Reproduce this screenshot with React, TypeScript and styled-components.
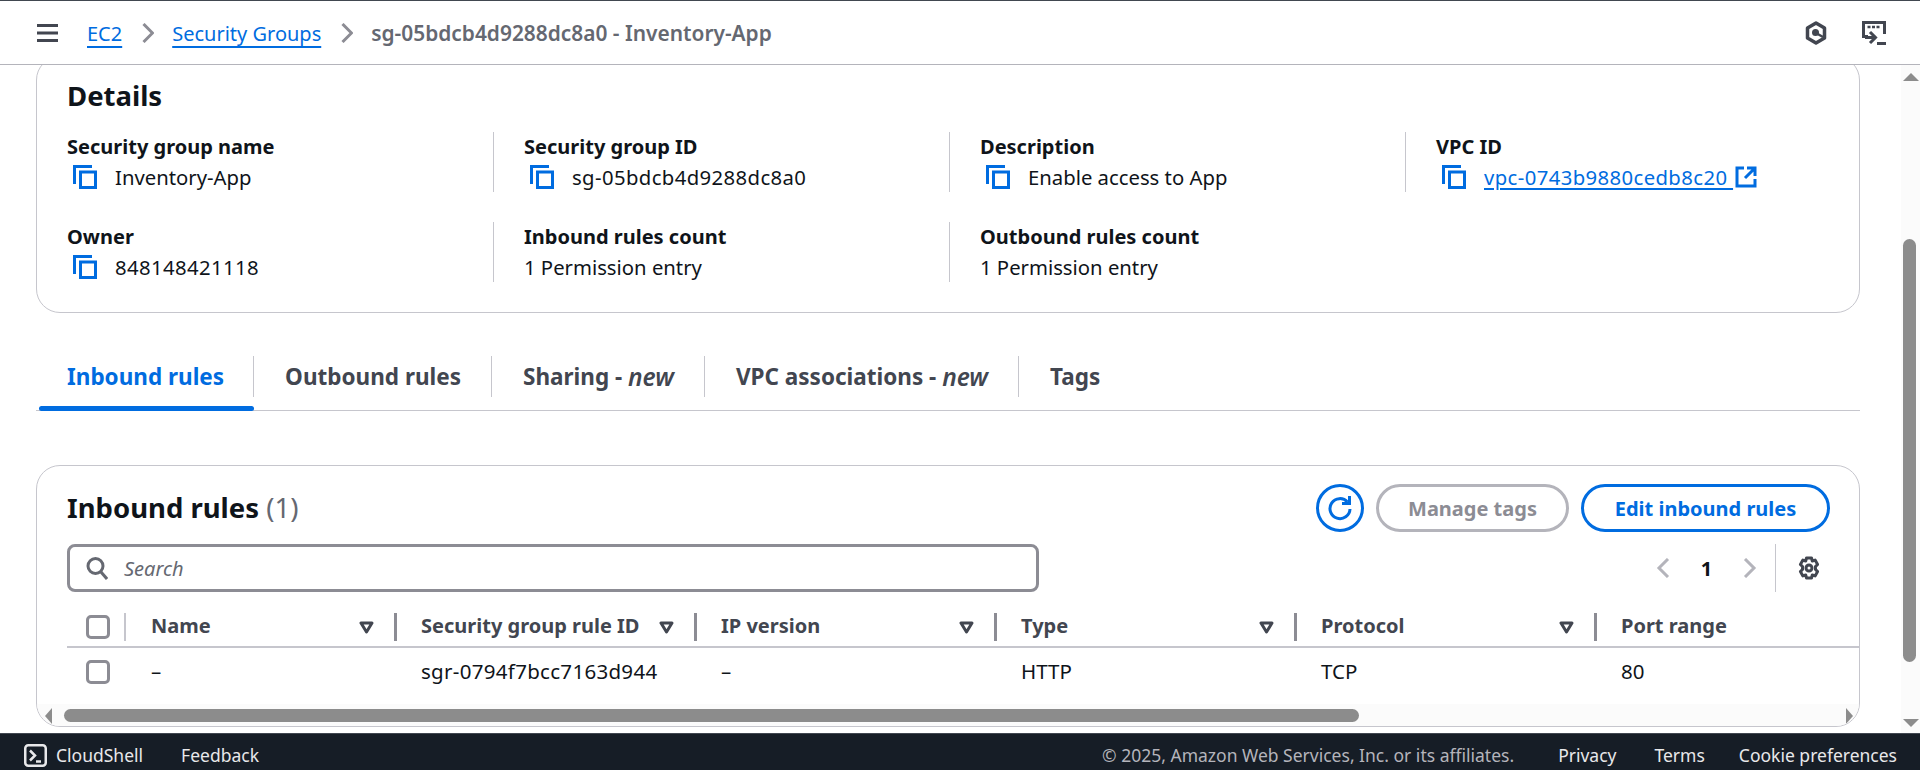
import React from 'react';
import styled, { createGlobalStyle } from 'styled-components';

const GlobalStyle = createGlobalStyle`
  html, body {
    margin: 0;
    padding: 0;
    height: 100%;
    overflow: hidden;
    background: #ffffff;
  }
  * { box-sizing: border-box; }
`;

const FONT = `"Noto Sans", Roboto, sans-serif`;
const BLUE = '#006ce0';

const Page = styled.div`
  width: 1920px;
  height: 770px;
  display: flex;
  flex-direction: column;
  font-family: ${FONT};
  font-size: 20px;
  color: #0f141a;
  overflow: hidden;
`;

/* top bar */
const TopBar = styled.header`
  height: 65px;
  flex: none;
  display: flex;
  align-items: center;
  border-top: 1px solid #414750;
  border-bottom: 1px solid #b4b4bb;
  padding: 0 34px 0 37px;
`;

const Crumbs = styled.nav`
  display: flex;
  align-items: center;
  margin-left: 29px;
  flex: 1;
  font-size: 20px;
  padding-top: 1px;
`;

const CrumbLink = styled.a`
  color: ${BLUE};
  text-decoration: underline;
  text-decoration-thickness: 2px;
  text-underline-offset: 5px;
`;

const CrumbCurrent = styled.span`
  color: #656871;
  font-size: 20.9px;
  font-weight: 600;
`;

const CrumbSep = styled.svg`
  width: 12px;
  height: 20px;
  margin: 0 18px 0 20px;
  fill: none;
  stroke: #8c8c94;
  stroke-width: 3;
`;

const TopIcons = styled.div`
  display: flex;
  gap: 34px;
  align-items: center;
  color: #424650;
`;

/* scroll area */
const Middle = styled.div`
  flex: 1;
  min-height: 0;
  display: flex;
`;

const Content = styled.main`
  flex: 1;
  min-width: 0;
  padding: 0 41px 0 36px;
  overflow: hidden;
`;

const ScrollTrack = styled.div`
  width: 19px;
  flex: none;
  background: #fbfbfb;
  display: flex;
  flex-direction: column;
  align-items: center;
  padding: 8px 0 6px;
`;

const ArrowUp = styled.div`
  width: 0;
  height: 0;
  border-left: 8px solid transparent;
  border-right: 8px solid transparent;
  border-bottom: 8px solid #8c8c8c;
`;

const ArrowDown = styled(ArrowUp)`
  border-bottom: 0;
  border-top: 8px solid #8c8c8c;
`;

const ScrollGap = styled.div`
  flex: 1;
  display: flex;
  flex-direction: column;
  align-self: stretch;
  padding: 158px 4px 57px 2px;
`;

const ScrollThumb = styled.div`
  flex: 1;
  background: #8c8c8c;
  border-radius: 7px;
`;

/* details card */
const Card = styled.section`
  border: 1px solid #c6c6cd;
  border-radius: 24px;
  background: #fff;
`;

const DetailsCard = styled(Card)`
  height: 257px;
  margin-top: -9px;
  padding: 21px 30px 0;
`;

const Heading = styled.h2`
  margin: 0;
  font-size: 27.5px;
  line-height: 36px;
  font-weight: 700;
`;

const DetailsGrid = styled.div`
  display: grid;
  grid-template-columns: repeat(4, 456px);
  grid-auto-rows: 60px;
  row-gap: 30px;
  margin-top: 18px;
`;

const DetailCell = styled.div<{ $first?: boolean }>`
  display: flex;
  flex-direction: column;
  padding-left: ${p => (p.$first ? 0 : 30)}px;
  margin-left: ${p => (p.$first ? 0 : -30)}px;
  border-left: ${p => (p.$first ? 'none' : '1px solid #c6c6cd')};
`;

const DetailLabel = styled.div`
  font-size: 20px;
  font-weight: 700;
  line-height: 30px;
`;

const DetailValue = styled.div<{ $id?: boolean }>`
  display: flex;
  align-items: center;
  height: 30px;
  font-size: 20.3px;
  letter-spacing: ${p => (p.$id ? '0.4px' : '0')};
  white-space: pre;
`;

const CopyWrap = styled.svg`
  width: 24px;
  height: 24px;
  margin: 0 18px 0 6px;
  fill: none;
  stroke: ${BLUE};
  stroke-width: 3;
  flex: none;
`;

const ValueLink = styled.a`
  color: ${BLUE};
  text-decoration: underline;
  text-decoration-thickness: 2px;
  text-underline-offset: 3px;
  margin-right: 2px;
`;

/* tabs */
const Tabs = styled.div`
  display: flex;
  height: 98px;
  align-items: flex-end;
  border-bottom: 1px solid #c6c6cd;
`;

const Tab = styled.div`
  height: 54px;
  position: relative;
  display: flex;
  align-items: flex-start;
`;

const TabLabel = styled.div<{ $active?: boolean; $last?: boolean }>`
  height: 41px;
  display: flex;
  align-items: center;
  padding: 0 30px 0 31px;
  font-size: 22.5px;
  font-weight: 700;
  color: ${p => (p.$active ? BLUE : '#424650')};
  border-right: ${p => (p.$last ? 'none' : '1px solid #c6c6cd')};
  white-space: pre;

  em { font-size: 24.5px; font-weight: 600; font-style: italic; }
`;

const FirstTabLabel = styled(TabLabel)`
  padding-right: 29px;
`;

const TabUnderline = styled.div`
  position: absolute;
  left: 3px;
  right: 0;
  bottom: -1px;
  height: 5px;
  background: ${BLUE};
  border-radius: 3px;
`;

/* inbound rules card */
const RulesCard = styled(Card)`
  margin-top: 54px;
  height: 262px;
  padding-top: 18px;
  overflow: hidden;
  display: flex;
  flex-direction: column;
`;

const RulesHead = styled.div`
  display: flex;
  justify-content: space-between;
  align-items: center;
  padding: 0 29px 0 30px;
  height: 48px;
`;

const Count = styled.span`
  font-weight: 400;
  color: #656871;
`;

const Actions = styled.div`
  display: flex;
  gap: 12px;
  align-items: center;
`;

const Pill = styled.button<{ $disabled?: boolean }>`
  height: 48px;
  padding: 0;
  width: ${p => (p.$disabled ? 193 : 249)}px;
  border-radius: 24px;
  background: #fff;
  border: 3px solid ${p => (p.$disabled ? '#b4b4bb' : BLUE)};
  color: ${p => (p.$disabled ? '#8c8c94' : BLUE)};
  font-family: ${FONT};
  font-size: 20px;
  font-weight: 700;
`;

const RoundButton = styled.button`
  width: 48px;
  height: 48px;
  padding: 0;
  border-radius: 50%;
  background: #fff;
  border: 3px solid ${BLUE};
  display: flex;
  align-items: center;
  justify-content: center;
`;

const ToolRow = styled.div`
  display: flex;
  align-items: center;
  height: 48px;
  margin-top: 12px;
  padding: 0 38px 0 30px;
`;

const SearchBox = styled.div`
  width: 972px;
  height: 48px;
  border: 3px solid #8c8c94;
  border-radius: 8px;
  display: flex;
  align-items: center;
  padding-left: 16px;
  color: #656871;
  font-style: italic;
  font-size: 20px;
  gap: 16px;
`;

const Pager = styled.div`
  margin-left: auto;
  display: flex;
  align-items: center;
  height: 48px;
`;

const PageNumber = styled.span`
  font-weight: 700;
  font-size: 20px;
  width: 73px;
  text-align: center;
`;

const PagerDivider = styled.div`
  width: 1px;
  height: 48px;
  background: #c6c6cd;
  margin: 0 21px 0 18px;
`;

/* table */
const TABLE_COLUMNS = '59px 268px repeat(5, 300px)';

const HeaderRow = styled.div`
  display: grid;
  grid-template-columns: ${TABLE_COLUMNS};
  margin: 13px 0 0 30px;
  height: 43px;
  border-bottom: 2px solid #c6c6cd;
  width: 1827px;
  flex: none;
`;

const HeaderCell = styled.div<{ $plain?: boolean }>`
  height: 28px;
  margin-top: 8px;
  display: flex;
  align-items: center;
  justify-content: space-between;
  padding: 0 20px 0 ${p => (p.$plain ? 25 : 24)}px;
  font-size: 20px;
  font-weight: 700;
  color: #424650;
  border-left: ${p => (p.$plain ? 'none' : '3px solid #8c8c94')};
`;

const HeaderLabel = styled.span`
  margin-bottom: 3px;
`;

const CheckCell = styled.div`
  height: 28px;
  margin-top: 8px;
  display: flex;
  align-items: center;
  padding-left: 19px;
  border-right: 2px solid #c6c6cd;
`;

const CheckBox = styled.div`
  width: 24px;
  height: 24px;
  border: 3px solid #8c8c94;
  border-radius: 5px;
`;

const DataRow = styled.div`
  display: grid;
  grid-template-columns: ${TABLE_COLUMNS};
  margin-left: 30px;
  height: 56px;
  padding-bottom: 8px;
  align-items: center;
  font-size: 20.5px;
  width: 1827px;
  flex: none;
`;

const DataCheck = styled.div`
  padding-left: 19px;
  display: flex;
`;

const DataCell = styled.div<{ $first?: boolean; $id?: boolean }>`
  padding-left: ${p => (p.$first ? 25 : 27)}px;
  margin-bottom: 2px;
  letter-spacing: ${p => (p.$id ? '0.3px' : '0')};
`;

const HScroll = styled.div`
  height: 23px;
  margin-top: auto;
  background: #fbfbfb;
  display: flex;
  align-items: center;
  flex: none;
  padding: 0 6px 0 8px;
`;

const ArrowLeft = styled.div`
  width: 0;
  height: 0;
  border-top: 8px solid transparent;
  border-bottom: 8px solid transparent;
  border-right: 7px solid #8c8c8c;
`;

const ArrowRight = styled.div`
  width: 0;
  height: 0;
  margin-left: auto;
  border-top: 8px solid transparent;
  border-bottom: 8px solid transparent;
  border-left: 7px solid #8c8c8c;
`;

const HThumb = styled.div`
  width: 1295px;
  height: 13px;
  margin-left: 12px;
  background: #8c8c8c;
  border-radius: 7px;
`;

/* footer */
const Footer = styled.footer`
  height: 37px;
  flex: none;
  background: #161d26;
  border-top: 1px solid #414750;
  display: flex;
  align-items: center;
  padding: 6px 23px 0 24px;
  font-size: 17.5px;
  color: #e8e8ea;
`;

const ShellButton = styled.div`
  display: flex;
  align-items: center;
  gap: 9px;
`;

const FooterLink = styled.span<{ $gap: number }>`
  margin-left: ${p => p.$gap}px;
`;

const FooterCopy = styled.span`
  margin-left: auto;
  color: #b4b4bb;
`;

/* icons */
const Chevron = () => (
  <CrumbSep viewBox="0 0 12 20"><path d="M1.500 1l9 9-9 9" /></CrumbSep>
);

const CopyIcon = () => (
  <CopyWrap viewBox="0 0 24 24">
    <path d="M19 1.500H1.500V19" />
    <rect x="7.500" y="7" width="15" height="15.500" />
  </CopyWrap>
);

const ExternalIcon = () => (
  <svg width="22" height="22" viewBox="0 0 22 22" fill="none" stroke={BLUE} strokeWidth="3">
    <path d="M9 2H2v18h18v-7" />
    <path d="M12 2h8v8M20 2L10 12" />
  </svg>
);

const SortIcon = () => (
  <svg width="15" height="13" viewBox="0 0 15 13" fill="none" stroke="#424650" strokeWidth="3" strokeLinejoin="round" style={{ flex: 'none' }}>
    <path d="M2 2h11L7.500 11z" />
  </svg>
);

const MenuIcon = () => (
  <svg width="21" height="18" viewBox="0 0 21 18" fill="none" stroke="#424650" strokeWidth="3">
    <path d="M0 1.500h21M0 9h21M0 16.500h21" />
  </svg>
);

const HexIcon = () => (
  <svg width="24" height="24" viewBox="0 0 24 24" fill="none" stroke="#424650" strokeWidth="3.500">
    <path d="M12 2l8.500 5v10L12 22l-8.500-5V7z" strokeLinejoin="round" />
    <circle cx="11.500" cy="11.500" r="3.500" fill="#424650" stroke="none" />
    <path d="M12 12l7 4" strokeWidth="2.500" />
  </svg>
);

const ConsoleIcon = () => (
  <svg width="24" height="24" viewBox="0 0 24 24" fill="none" stroke="#424650" strokeWidth="3">
    <path d="M6 15.500H1.500v-14h21V13" />
    <path d="M5.500 6h3M10 6h3M14.500 6h3" strokeWidth="2.500" />
    <path d="M8 11l5.500 5.500L8 22M3 16.500h10M15 22.500h9" />
  </svg>
);

const RefreshIcon = () => (
  <svg width="24" height="26" viewBox="0 0 24 26" fill="none" stroke={BLUE} strokeWidth="3">
    <path d="M19.500 7a10 10 0 1 0 2.500 7" />
    <path d="M21.500 1v7.500H14" />
  </svg>
);

const SearchIcon = () => (
  <svg width="22" height="24" viewBox="0 0 22 24" fill="none" stroke="#656871" strokeWidth="3">
    <circle cx="9.500" cy="10" r="7.500" />
    <path d="M15 16l6 7" />
  </svg>
);

const PagerChevron = ({ left }: { left?: boolean }) => (
  <svg width="14" height="20" viewBox="0 0 14 20" fill="none" stroke="#b4b4bb" strokeWidth="3">
    <path d={left ? 'M12 1L3 10l9 9' : 'M2 1l9 9-9 9'} />
  </svg>
);

const GearIcon = () => (
  <svg width="24" height="24" viewBox="0 0 24 24" fill="none" stroke="#424650" strokeWidth="3" strokeLinejoin="round">
    <path d="M9.500 2h5l.8 3 2.800-.9 2.500 4.300-2.100 2.100v3l2.100 2.100-2.500 4.300-2.800-.9-.8 3h-5l-.8-3-2.800.9-2.500-4.300 2.100-2.100v-3L3.400 8.400l2.500-4.300 2.800.9z" />
    <circle cx="12" cy="12" r="3" />
  </svg>
);

const ShellIcon = () => (
  <svg width="23" height="23" viewBox="0 0 23 23" fill="none" stroke="#e8e8ea" strokeWidth="2.500">
    <rect x="1.250" y="1.250" width="20.500" height="20.500" rx="3" />
    <path d="M6 6.500l5 5-5 5M12 17.500h5" />
  </svg>
);

/* data */
const details = [
  { label: 'Security group name', value: 'Inventory-App', copy: true },
  { label: 'Security group ID', value: 'sg-05bdcb4d9288dc8a0', copy: true, id: true },
  { label: 'Description', value: 'Enable access to App', copy: true },
  { label: 'VPC ID', value: 'vpc-0743b9880cedb8c20', copy: true, link: true, id: true },
  { label: 'Owner', value: '848148421118', copy: true, id: true },
  { label: 'Inbound rules count', value: '1 Permission entry' },
  { label: 'Outbound rules count', value: '1 Permission entry' },
];

const columns = ['Name', 'Security group rule ID', 'IP version', 'Type', 'Protocol', 'Port range'];
const row = ['–', 'sgr-0794f7bcc7163d944', '–', 'HTTP', 'TCP', '80'];

const App: React.FC = () => (
  <Page>
    <GlobalStyle />
    <TopBar>
      <MenuIcon />
      <Crumbs>
        <CrumbLink>EC2</CrumbLink>
        <Chevron />
        <CrumbLink>Security Groups</CrumbLink>
        <Chevron />
        <CrumbCurrent>sg-05bdcb4d9288dc8a0 - Inventory-App</CrumbCurrent>
      </Crumbs>
      <TopIcons>
        <HexIcon />
        <ConsoleIcon />
      </TopIcons>
    </TopBar>

    <Middle>
      <Content>
        <DetailsCard>
          <Heading>Details</Heading>
          <DetailsGrid>
            {details.map((d, i) => (
              <DetailCell key={d.label} $first={i % 4 === 0}>
                <DetailLabel>{d.label}</DetailLabel>
                <DetailValue $id={d.id}>
                  {d.copy && <CopyIcon />}
                  {d.link ? <ValueLink>{d.value + ' '}</ValueLink> : d.value}
                  {d.link && <ExternalIcon />}
                </DetailValue>
              </DetailCell>
            ))}
          </DetailsGrid>
        </DetailsCard>

        <Tabs>
          <Tab>
            <FirstTabLabel $active>Inbound rules</FirstTabLabel>
            <TabUnderline />
          </Tab>
          <Tab><TabLabel>Outbound rules</TabLabel></Tab>
          <Tab><TabLabel>Sharing - <em>new</em></TabLabel></Tab>
          <Tab><TabLabel>VPC associations - <em>new</em></TabLabel></Tab>
          <Tab><TabLabel $last>Tags</TabLabel></Tab>
        </Tabs>

        <RulesCard>
          <RulesHead>
            <Heading>Inbound rules <Count>(1)</Count></Heading>
            <Actions>
              <RoundButton><RefreshIcon /></RoundButton>
              <Pill $disabled>Manage tags</Pill>
              <Pill>Edit inbound rules</Pill>
            </Actions>
          </RulesHead>
          <ToolRow>
            <SearchBox><SearchIcon />Search</SearchBox>
            <Pager>
              <PagerChevron left />
              <PageNumber>1</PageNumber>
              <PagerChevron />
              <PagerDivider />
              <GearIcon />
            </Pager>
          </ToolRow>
          <HeaderRow>
            <CheckCell><CheckBox /></CheckCell>
            {columns.map((c, i) => (
              <HeaderCell key={c} $plain={i === 0}>
                <HeaderLabel>{c}</HeaderLabel>
                <SortIcon />
              </HeaderCell>
            ))}
          </HeaderRow>
          <DataRow>
            <DataCheck><CheckBox /></DataCheck>
            {row.map((c, i) => <DataCell key={i} $first={i === 0} $id={i === 1}>{c}</DataCell>)}
          </DataRow>
          <HScroll>
            <ArrowLeft />
            <HThumb />
            <ArrowRight />
          </HScroll>
        </RulesCard>
      </Content>
      <ScrollTrack>
        <ArrowUp />
        <ScrollGap><ScrollThumb /></ScrollGap>
        <ArrowDown />
      </ScrollTrack>
    </Middle>

    <Footer>
      <ShellButton><ShellIcon />CloudShell</ShellButton>
      <FooterLink $gap={38}>Feedback</FooterLink>
      <FooterCopy>© 2025, Amazon Web Services, Inc. or its affiliates.</FooterCopy>
      <FooterLink $gap={44}>Privacy</FooterLink>
      <FooterLink $gap={38}>Terms</FooterLink>
      <FooterLink $gap={34}>Cookie preferences</FooterLink>
    </Footer>
  </Page>
);

export default App;
